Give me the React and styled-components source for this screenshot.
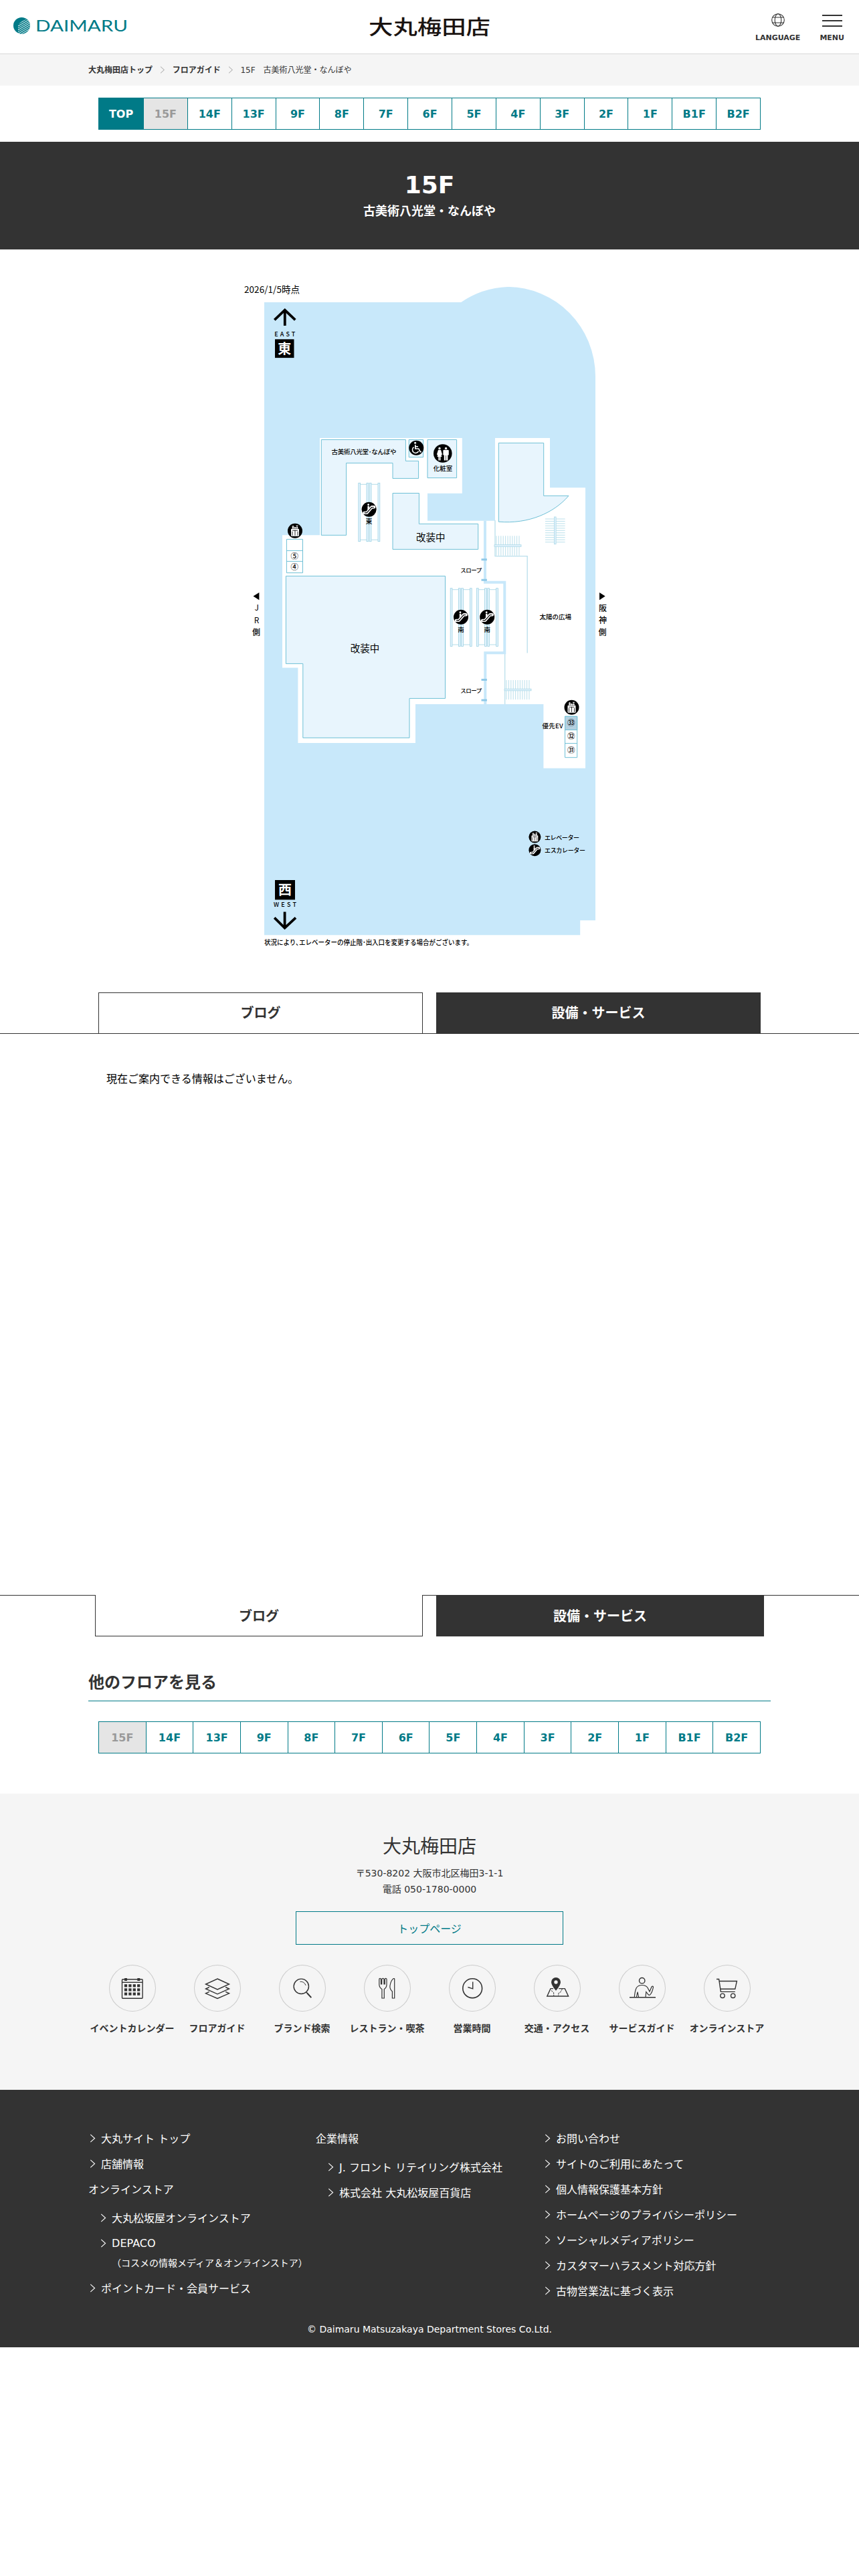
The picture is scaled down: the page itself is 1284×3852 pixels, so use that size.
import React from 'react'
import styled, { createGlobalStyle, css } from 'styled-components'

const teal = '#007a87'
const dark = '#333'
const pale = '#f5f5f5'

const GlobalStyle = createGlobalStyle`
  *, *::before, *::after {
    box-sizing: border-box;
  }

  body {
    margin: 0;
    background: #fff;
    color: ${dark};
    font-family: 'DejaVu Sans', 'Noto Sans CJK JP', sans-serif;
    font-size: 16px;
  }

  h1, h2, p, ul {
    margin: 0;
    padding: 0;
  }

  ul {
    list-style: none;
  }

  svg {
    display: block;
  }

  a {
    color: inherit;
    text-decoration: none;
  }
`

const Header = styled.header`
  display: grid;
  grid-template-columns: 1fr auto 1fr;
  height: 81px;
  border-bottom: 1px solid #d9d9d9;
`

const LogoLink = styled.a`
  padding: 24px 0 0 18px;
`

const StoreName = styled.a`
  padding-top: 12px;
`

const HeaderTools = styled.div`
  display: flex;
  justify-content: flex-end;
  gap: 29px;
  padding: 20px 22px 0 0;
`

const Tool = styled.button`
  display: flex;
  flex-direction: column;
  align-items: center;
  justify-content: space-between;
  height: 43px;
  padding: 0;
  border: 0;
  background: none;
  color: ${dark};
  font: bold 11px/13px 'DejaVu Sans', sans-serif;
`

const Bars = styled.span`
  width: 30px;
  height: 18px;
  margin-top: 2px;
  border-top: 2px solid ${dark};
  border-bottom: 2px solid ${dark};

  &::before {
    content: '';
    display: block;
    height: 2px;
    margin-top: 6px;
    background: ${dark};
  }
`

const Breadcrumb = styled.nav`
  display: flex;
  align-items: center;
  gap: 11px;
  height: 47px;
  padding: 0 132px;
  background: ${pale};
  font-size: 12px;
  line-height: 18px;

  a {
    font-weight: bold;
  }
`

const FloorList = styled.ul`
  display: flex;
  width: 990px;
  height: 48px;
  margin: ${props => props.$margin};
  border: 1px solid ${teal};
`

const Floor = styled.li`
  flex: 1;
  display: flex;
  align-items: center;
  justify-content: center;
  border-left: 1px solid ${teal};
  color: ${teal};
  font-weight: bold;

  &:first-child {
    border-left: 0;
  }

  ${props => props.$top && css`
    flex: 0 0 66px;
    background: ${teal};
    color: #fff;
  `}

  ${props => props.$current && css`
    background: #e5e5e5;
    color: #999;
  `}
`

const FloorTitle = styled.div`
  height: 161px;
  padding-top: 43px;
  background: ${dark};
  color: #fff;
  text-align: center;

  h1 {
    font-size: 36px;
    line-height: 44px;
  }

  p {
    margin-top: 3px;
    font-size: 18px;
    font-weight: bold;
    line-height: 27px;
  }
`

const MapArea = styled.section`
  display: flex;
  justify-content: center;
  height: 1111px;
  padding-top: 37px;
`

const TabBar = styled.div`
  display: flex;
  justify-content: center;
  gap: 20px;
  height: 62px;
  border-${props => props.$edge}: 1px solid ${dark};
`

const Tab = styled.a`
  width: ${props => props.$width}px;
  height: 61px;
  padding-bottom: ${props => props.$low ? 0 : '4px'};
  display: flex;
  align-items: center;
  justify-content: center;
  border: 1px solid ${dark};
  border-bottom-width: ${props => props.$low ? '1px' : 0};
  border-top-width: ${props => props.$low ? 0 : '1px'};
  background: ${props => props.$filled ? dark : '#fff'};
  color: ${props => props.$filled ? '#fff' : dark};
  font-size: 20px;
  font-weight: bold;

  /* the lower bar's line stops where the open tab hangs from it */
  ${props => props.$low && css`
    height: 62px;
    margin-top: -1px;
  `}
`

const Empty = styled.p`
  height: 839px;
  padding: 56px 159px 0;
  color: #000;
  line-height: 24px;
`

const OtherFloors = styled.h2`
  width: 1020px;
  height: 97px;
  margin: 0 auto;
  padding-top: 51px;
  border-bottom: 1px solid ${teal};
  font-size: 24px;
  line-height: 36px;
`

const StoreInfo = styled.section`
  height: 443px;
  padding-top: 57px;
  background: ${pale};
  text-align: center;

  h2 {
    font-size: 28px;
    font-weight: normal;
    line-height: 46px;
  }

  p {
    font-size: 14px;
    line-height: 24px;
  }

  p:first-of-type {
    margin-top: 4px;
  }
`

const TopPageButton = styled.a`
  display: flex;
  align-items: center;
  justify-content: center;
  width: 400px;
  height: 50px;
  margin: 21px auto 30px;
  border: 1px solid ${teal};
  color: ${teal};
`

const Shortcuts = styled.ul`
  display: flex;
  width: 1016px;
  margin: 0 auto;
`

const Shortcut = styled.li`
  flex: 1;
  display: flex;
  flex-direction: column;
  align-items: center;
  gap: 15px;
  font-size: 14px;
  font-weight: bold;
  line-height: 20px;
  white-space: nowrap;
`

const Round = styled.span`
  width: 70px;
  height: 70px;
  border-radius: 50%;
  box-shadow: inset 0 0 0 1px #ccc;
`

const Footer = styled.footer`
  height: 385px;
  padding: 60px 132px 0;
  background: ${dark};
  color: #fff;
`

const FooterColumns = styled.div`
  display: grid;
  grid-template-columns: repeat(3, 1fr);
  height: 286px;
`

const FooterLink = styled.li`
  display: flex;
  align-items: center;
  gap: 8px;
  height: 24px;
  margin: 0 0 14px ${props => props.$sub ? '16px' : 0};
  padding-left: ${props => props.$plain ? 0 : '2px'};
  white-space: nowrap;

  ${props => props.$heading && css`
    margin-bottom: 19px;
  `}

  ${props => props.$note && css`
    height: 20px;
    margin: -7px 0 16px 35px;
    padding: 0;
    font-size: 14px;
  `}
`

const Copyright = styled.p`
  font-size: 14px;
  line-height: 24px;
  text-align: center;
`

const Chevron = ({ color = '#fff', size = 13 }) => (
  <svg width={size * 0.7} height={size} viewBox='0 0 8.4 12' fill='none' stroke={color}>
    <path d='M1.2 .8L7 6l-5.8 5.2' />
  </svg>
)

const Logo = () => (
  <svg width='175' height='30' viewBox='18 24 175 30'>
    <clipPath id='mark'>
      <circle cx='32.4' cy='38.3' r='12.4' />
    </clipPath>
    <g clipPath='url(#mark)'>
      <rect x='20' y='25' width='26' height='27' fill={teal} />
      <path d='M27 52V39q1-7 19-12v25z' fill='#fff' />
      <g stroke={teal} strokeWidth='1.7'>
        {[0, 1, 2, 3, 4, 5, 6, 7, 8].map(i =>
          <path key={i} d={`M27 ${37.5 + i * 2.9}L46 ${26.5 + i * 2.9}`} />
        )}
      </g>
    </g>
    <text
      x='53' y='47' fill={teal} fontSize='23.5' fontFamily='Lato, sans-serif'
      textLength='138' lengthAdjust='spacingAndGlyphs'
    >DAIMARU</text>
  </svg>
)

const StoreLogo = () => (
  <svg width='186' height='52' viewBox='549 12 186 52'>
    <text
      x='551' y='50.5' fill='#1a1311' fontSize='30' fontWeight='500'
      fontFamily='Noto Sans CJK JP, sans-serif' textLength='182' lengthAdjust='spacingAndGlyphs'
    >大丸梅田店</text>
  </svg>
)

const Globe = () => (
  <svg width='20' height='20' viewBox='0 0 20 20' fill='none' stroke={dark} strokeWidth='1.1'>
    <circle cx='10' cy='10' r='9.3' />
    <ellipse cx='10' cy='10' rx='4.8' ry='9.3' />
    <path d='M1.8 6h16.4M1.8 14h16.4' />
  </svg>
)

const EscalatorMark = ({ x, y, r = 11 }) => (
  <g transform={`translate(${x} ${y}) scale(${r / 11})`}>
    <circle r='11' fill='#000' />
    <path
      d='M-7.2 5.2h4L4.2-3.4h3.4' fill='none' stroke='#fff' strokeWidth='4.4'
      strokeLinecap='round' strokeLinejoin='round'
    />
    <path d='M-6.8 5.2h3.4L4 -3.2h3.2' fill='none' stroke='#000' strokeWidth='1.2' />
    <circle cx='-1' cy='-7' r='1.4' fill='#fff' />
    <path d='M-2.2-5h2.6v5l-2.6 2z' fill='#fff' />
  </g>
)

const ElevatorMark = ({ x, y, r = 11 }) => (
  <g transform={`translate(${x} ${y}) scale(${r / 11})`}>
    <circle r='11' fill='#000' />
    <rect x='-6' y='-3' width='12' height='11' rx='1' fill='#fff' />
    <path d='M-5-6l2-2 2 2zM1-8h4l-2 2z' fill='#fff' />
    <circle cx='-3' cy='-4.5' r='1.3' fill='#fff' />
    <circle cx='0' cy='-4.5' r='1.3' fill='#fff' />
    <circle cx='3' cy='-4.5' r='1.3' fill='#fff' />
    <path d='M-4 7V1M0 7V-1M4 7V1M-4-.5h8' stroke='#000' strokeWidth='.8' />
  </g>
)

const Escalator = ({ x, y, height, name }) => (
  <g>
    <g fill='#e3f3fd' stroke='#9fd3e3' strokeWidth='.8'>
      {[0, 12.2, 16.4, 29.2].map(dx =>
        <rect key={dx} x={x + dx} y={y} width='2.8' height={height} />
      )}
      <path d={`M${x + 3} ${y + 2}h9.4m7 0h9.8M${x + 3} ${y + height - 2.5}h9.4m7 0h9.8`} />
    </g>
    <EscalatorMark x={x + 15.8} y={y + (name === '東' ? 39.4 : 43)} />
    <text x={x + 15.8} y={y + (name === '東' ? 60.5 : 65.4)} textAnchor='middle' fontSize='9.5'>
      {name}
    </text>
  </g>
)

const Stairs = ({ x, y, length, width, turned }) => (
  <g
    transform={turned ? `translate(${x} ${y}) matrix(0 1 1 0 0 0)` : `translate(${x} ${y})`}
    stroke='#a9d8e6'
    strokeWidth='.8'
  >
    {[0, 1, 2, 3, 4, 5, 6, 7, 8, 9, 10].map(i =>
      <path key={i} d={`M${3 + i * (length - 6) / 10} 0v${width}`} />
    )}
    <rect x='0' y={width / 2 - 1.3} width={length} height='2.6' fill='#e3f3fd' />
  </g>
)

const FloorMap = () => (
  <svg
    width='584' height='1020' viewBox='0 0 584 1020'
    fontFamily='Noto Sans CJK JP, sans-serif' fontWeight='500'
  >
    <path
      d='M45 42H339.2A132 132 0 0 1 408.5 19A131.5 134 0 0 1 540 153V966.3H517.2V988.3H45z'
      fill='#c8e8fa'
    />
    <path
      d='M128 245H340.8V327.7H289V368.7H390V245H472V319.3H525V738.7H462.4V643H271V701H95.4
        V588.5H72V390.3H128z'
      fill='#fff'
    />
    <g fill='none' stroke='#b9dfec' strokeWidth='1.3'>
      <path d='M390 368V421.7H438.2V566.5M404.7 565V643' />
    </g>
    <path d='M375 368.7V460.8H404.3V566.2H375.3V643' fill='none' stroke='#c8e8fa' strokeWidth='4' />
    <path
      d='M369.5 426.7h8.4M369.5 457.2h8.4M369.5 606.4h8.4M369.5 637h8.4'
      stroke='#8fc9e8' strokeWidth='3'
    />
    <g fill='#e8f5fd' stroke='#6fc0d6' strokeWidth='1'>
      <path d='M130.3 247.5H256.4V279.3H275.6V305.4H237V282.4H167.6V390.3H130.3z' />
      <path d='M261.2 247.5h21.4v26.2h-21.4zM289 247.5h43.6v57.1H289z' />
      <path d='M237 327.5H276.4V373.4H364.7V411.4H237z' />
      <path d='M395.3 252.4H462.7V331.4H500C478 357 440 374 395.3 370.2z' />
      <path d='M77.4 451.4H315.5V634.4H262V693.3H102.8V582.4H77.4z' />
    </g>
    <g fill='#fff' stroke='#6fc0d6'>
      <path d='M78.4 396.4h24.1v50.2H78.4zM78.4 413.4h24.1M78.4 429.4h24.1' />
      <path d='M494.5 661.3h18.2v61.4h-18.2z' />
      <path d='M494.5 661.3h18.2v20.2h-18.2z' fill='#b4d0e0' />
      <path d='M494.5 701.6h18.2' />
    </g>
    <Escalator x={185.8} y={312.3} height={87.4} name='東' />
    <Escalator x={323.2} y={469.7} height={86.8} name='南' />
    <Escalator x={362.4} y={469.7} height={86.8} name='南' />
    <Stairs x={389} y={391.3} length={40} width={29.4} />
    <Stairs x={465} y={363} length={40.6} width={29.6} turned />
    <Stairs x={404} y={607} length={40} width={29} />
    <ElevatorMark x={91} y={383.7} />
    <ElevatorMark x={504.5} y={647.8} />
    <ElevatorMark x={449.4} y={841.6} r={9} />
    <EscalatorMark x={449.4} y={861.2} r={9} />

    {/* accessible toilet */}
    <circle cx='272.3' cy='259.7' r='11' fill='#000' />
    <circle cx='270.6' cy='252.2' r='1.5' fill='#fff' />
    <path
      d='M270.8 255v6h5l2.4 4.6h1.6M271 257.7h4' fill='none' stroke='#fff' strokeWidth='1.6'
    />
    <path
      d='M268.6 258.6a4.8 4.8 0 1 0 7 6' fill='none' stroke='#fff' strokeWidth='1.5'
    />

    {/* restrooms */}
    <circle cx='311.8' cy='268' r='13.8' fill='#000' />
    <g fill='#fff'>
      <circle cx='307' cy='260.4' r='1.7' />
      <circle cx='316.6' cy='260.4' r='1.7' />
      <path d='M305 262.7h4l2 7-1.4.6.8 2.7h-1.8v5.4h-1.4V273h-.5v5.4h-1.4V273h-1.8l.8-2.7-1.4-.6z' />
      <path d='M313.8 262.7h5.6q1.4 0 1.4 1.4v6.4h-1.4v8h-2.5V271h-.6v7.5h-2.5v-8h-1.4v-6.4q0-1.4 1.4-1.4z' />
    </g>

    <g fill='none' stroke='#000' strokeWidth='3.8'>
      <path d='M75.8 77V53M60.3 68.3L75.8 53.6 91.3 68.3' />
      <path d='M75.6 953.6V978M60.2 962.3L75.6 977.6 92 962.3' />
    </g>
    <rect x='61' y='97.3' width='28.5' height='27.8' />
    <rect x='61' y='906' width='30' height='29.4' />
    <g fill='#fff' fontSize='20' fontWeight='700' textAnchor='middle'>
      <text x='75.3' y='118.6'>東</text>
      <text x='76' y='928.4'>西</text>
    </g>
    <g fontSize='9'>
      <text x='60.3' y='92.9' textLength='31'>EAST</text>
      <text x='59' y='946' textLength='34'>WEST</text>
    </g>
    <path d='M37.4 476v11.2L28.5 481.6zM546 476v11.2L554.7 481.6z' />
    <g fontSize='12' textAnchor='middle'>
      <text x='33.6' y='503' fontWeight='400'>J</text>
      <text x='33.6' y='522.4' fontWeight='400'>R</text>
      <text x='33' y='540'>側</text>
      <text x='551' y='504'>阪</text>
      <text x='551' y='522.4'>神</text>
      <text x='550.4' y='540'>側</text>
    </g>
    <text x='15' y='28.3' fontSize='13.5' fontWeight='400' textLength='83'>2026/1/5時点</text>
    <text x='145.5' y='269' fontSize='9.5' textLength='97'>古美術八光堂･なんぼや</text>
    <g fontSize='14.5' fontWeight='400' textAnchor='middle'>
      <text x='293.7' y='399'>改装中</text>
      <text x='195.4' y='565.3'>改装中</text>
    </g>
    <g fontSize='9.5'>
      <text x='297.8' y='293.5'>化粧室</text>
      <text x='338.2' y='446.3' fontSize='8.5' textLength='32'>スロープ</text>
      <text x='338.2' y='626.4' fontSize='8.5' textLength='32'>スロープ</text>
      <text x='456.6' y='516'>太陽の広場</text>
      <text x='460.6' y='678.5' textLength='31'>優先EV</text>
    </g>
    <g fontSize='11.5' textAnchor='middle'>
      <text x='90.2' y='425.8'>⑤</text>
      <text x='90.2' y='442'>④</text>
      <text x='503.7' y='675'>㉝</text>
      <text x='503.7' y='695.4'>㉜</text>
      <text x='503.7' y='716.2'>㉛</text>
    </g>
    <g fontSize='9'>
      <text x='464' y='845.5' textLength='52'>エレベーター</text>
      <text x='464' y='864.8' textLength='61'>エスカレーター</text>
    </g>
    <text x='45' y='1002.8' fontSize='10.2' textLength='312' lengthAdjust='spacingAndGlyphs'>
      状況により､エレベーターの停止階･出入口を変更する場合がございます。
    </text>
  </svg>
)

const shortcuts = [
  {
    label: 'イベントカレンダー',
    icon: <>
      <rect x='19.5' y='21.8' width='30.6' height='28.4' rx='1' />
      <path d='M19.5 26.3h30.6' />
      <path
        d='M23 20h4v4h-4zM42.3 20h4v4h-4z' fill={dark} stroke='none'
      />
      {[31.3, 37.4, 43.6].map(y => [25, 31.4, 37.8, 44.2].map(x =>
        <rect key={x + y} x={x - 2.1} y={y - 2.1} width='4.2' height='4.2' fill={dark} stroke='none' />
      ))}
    </>
  },
  {
    label: 'フロアガイド',
    icon: <>
      <path d='M35 21L52.5 29 35 37 17.5 29z' />
      <path d='M22.8 33.5L17.5 36 35 43.8 52.5 36 47.2 33.5' />
      <path d='M22.8 40.3L17.5 42.8 35 50.4 52.5 42.8 47.2 40.3' />
    </>
  },
  {
    label: 'ブランド検索',
    icon: <>
      <circle cx='33.3' cy='32.3' r='11.2' />
      <path d='M40.7 40.9l1.6 1.6' />
      <path d='M42 42.3l6.3 6.8' strokeWidth='2' />
      <path d='M31.5 25.2q6.2-.4 8.6 5.6' strokeWidth='1' />
    </>
  },
  {
    label: 'レストラン・喫茶',
    icon: <>
      <path
        d='M26.9 50V36.6Q23 34 22.8 29.5V22q0-1.6 1.3-1.6t1.4 1.6v7h1.2v-7q0-1.6 1.7-1.6T30 22v7h1.2v-7
          q0-1.6 1.4-1.6T34 22v7.5q0 4.5-3.7 7.1V50z'
        strokeWidth='1.2'
      />
      <path d='M45.7 50V21.2Q45.5 20.3 44.3 20.6 40.4 23 38.9 31.5 38.4 36.3 42.4 40V50z' strokeWidth='1.2' />
    </>
  },
  {
    label: '営業時間',
    icon: <>
      <circle cx='35.2' cy='35.2' r='14.4' strokeWidth='1.6' />
      <path d='M35.7 25.4v10.4l-7.3-2.3' />
    </>
  },
  {
    label: '交通・アクセス',
    icon: <>
      <path d='M29 35.6H25L19.8 47H51.6L46.3 35.6H37.2' />
      <path d='M26 38.5l3.6 3 .2 5.3M42.5 36l-2.8 5-2.6 1.2-.6 4.5' strokeWidth='1' strokeDasharray='3 1' />
      <path
        d='M33 38.8Q26 30.5 26 26a7 7 0 0 1 14 0Q40 30.5 33 38.8z' fill={dark} stroke='none'
      />
      <circle cx='33' cy='26' r='2.7' fill={pale} stroke='none' />
    </>
  },
  {
    label: 'サービスガイド',
    icon: <>
      <circle cx='34.7' cy='23.7' r='4.2' />
      <path d='M16 48.8h39' />
      <path
        d='M23.3 48.5q.7-9.5 3-14 2.5-4 8.4-4t8.3 3.8l3 5.7 3.2-7.3q1.7-1.3 2.3.6-1.5 8.3-5 11.7-1.2.8-2.3-.2
          L40.8 40.5l-.8 8M26.4 48.5l1.6-8 1.6 8'
        strokeWidth='1.2'
      />
    </>
  },
  {
    label: 'オンラインストア',
    icon: <>
      <path d='M19 21.5h3.6L25.4 40.4H46.8M23 24.5H49.4L46.8 36.3H24.8' />
      <circle cx='28' cy='46.3' r='3.2' />
      <circle cx='43.7' cy='46.3' r='3.2' />
    </>
  }
]

const floors = [
  '15F', '14F', '13F', '9F', '8F', '7F', '6F', '5F', '4F', '3F', '2F', '1F', 'B1F', 'B2F'
]

const footerLinks = [
  [
    { text: '大丸サイト トップ' },
    { text: '店舗情報' },
    { text: 'オンラインストア', heading: true },
    { text: '大丸松坂屋オンラインストア', sub: true },
    { text: 'DEPACO', sub: true },
    { text: '（コスメの情報メディア＆オンラインストア）', note: true },
    { text: 'ポイントカード・会員サービス' }
  ],
  [
    { text: '企業情報', heading: true },
    { text: 'J. フロント リテイリング株式会社', sub: true },
    { text: '株式会社 大丸松坂屋百貨店', sub: true }
  ],
  [
    { text: 'お問い合わせ' },
    { text: 'サイトのご利用にあたって' },
    { text: '個人情報保護基本方針' },
    { text: 'ホームページのプライバシーポリシー' },
    { text: 'ソーシャルメディアポリシー' },
    { text: 'カスタマーハラスメント対応方針' },
    { text: '古物営業法に基づく表示' }
  ]
]

const FloorNav = ({ withTop, margin }) => (
  <FloorList $margin={margin}>
    {withTop && <Floor $top>TOP</Floor>}
    {floors.map(f => <Floor key={f} $current={f === '15F'}>{f}</Floor>)}
  </FloorList>
)

const App = () => (
  <React.Fragment>
    <GlobalStyle />
    <Header>
      <LogoLink><Logo /></LogoLink>
      <StoreName><StoreLogo /></StoreName>
      <HeaderTools>
        <Tool><Globe />LANGUAGE</Tool>
        <Tool><Bars />MENU</Tool>
      </HeaderTools>
    </Header>
    <Breadcrumb>
      <a>大丸梅田店トップ</a>
      <Chevron color='#999' size={11} />
      <a>フロアガイド</a>
      <Chevron color='#999' size={11} />
      <span>15F　古美術八光堂・なんぼや</span>
    </Breadcrumb>
    <FloorNav withTop margin='18px auto' />
    <FloorTitle>
      <h1>15F</h1>
      <p>古美術八光堂・なんぼや</p>
    </FloorTitle>
    <MapArea>
      <FloorMap />
    </MapArea>
    <TabBar $edge='bottom'>
      <Tab $width={485}>ブログ</Tab>
      <Tab $width={485} $filled>設備・サービス</Tab>
    </TabBar>
    <Empty>現在ご案内できる情報はございません。</Empty>
    <TabBar $edge='top'>
      <Tab $low $width={490}>ブログ</Tab>
      <Tab $low $width={490} $filled>設備・サービス</Tab>
    </TabBar>
    <OtherFloors>他のフロアを見る</OtherFloors>
    <FloorNav margin='30px auto 60px' />
    <StoreInfo>
      <h2>大丸梅田店</h2>
      <p>〒530-8202 大阪市北区梅田3-1-1</p>
      <p>電話 050-1780-0000</p>
      <TopPageButton>トップページ</TopPageButton>
      <Shortcuts>
        {shortcuts.map(({ label, icon }) =>
          <Shortcut key={label}>
            <Round>
              <svg width='70' height='70' fill='none' stroke={dark} strokeWidth='1.4'>{icon}</svg>
            </Round>
            {label}
          </Shortcut>
        )}
      </Shortcuts>
    </StoreInfo>
    <Footer>
      <FooterColumns>
        {footerLinks.map((links, i) =>
          <ul key={i}>
            {links.map(({ text, sub, heading, note }) =>
              <FooterLink key={text} $sub={sub} $heading={heading} $note={note} $plain={heading}>
                {!heading && !note && <Chevron />}
                {text}
              </FooterLink>
            )}
          </ul>
        )}
      </FooterColumns>
      <Copyright>© Daimaru Matsuzakaya Department Stores Co.Ltd.</Copyright>
    </Footer>
  </React.Fragment>
)

export default App
